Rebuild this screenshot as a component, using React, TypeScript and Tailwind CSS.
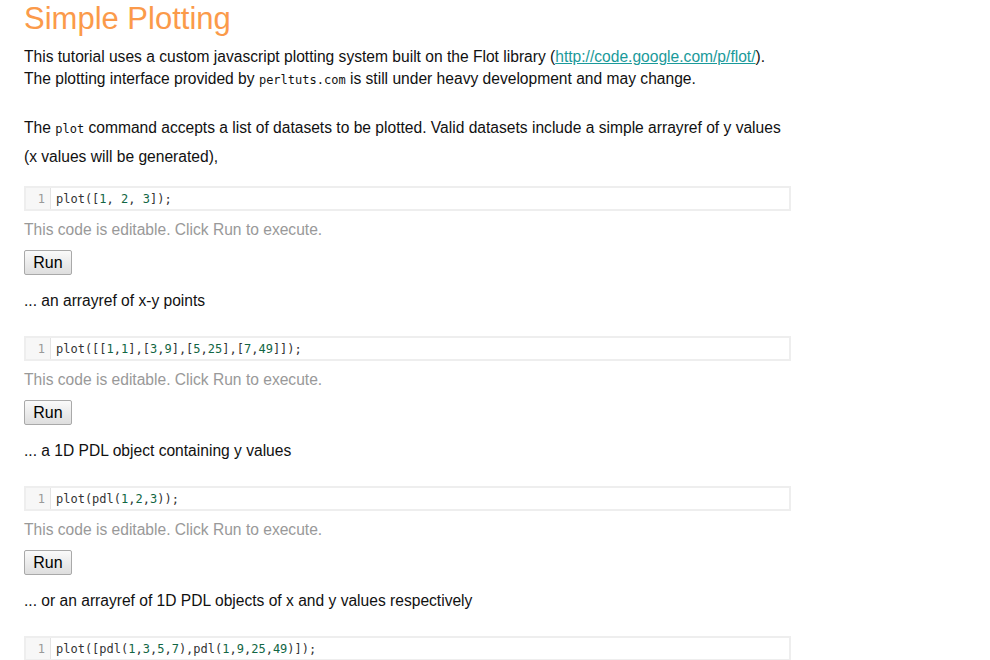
const sans = "font-['Liberation_Sans',Arial,sans-serif]";
const mono = "font-['DejaVu_Sans_Mono',monospace]";

type Token = { t: string; num?: boolean };

function tokenize(code: string): Token[] {
  const out: Token[] = [];
  const re = /(\d+)|([^\d]+)/g;
  let m: RegExpExecArray | null;
  while ((m = re.exec(code))) {
    if (m[1]) out.push({ t: m[1], num: true });
    else out.push({ t: m[2] });
  }
  return out;
}

function CodeBlock({ code }: { code: string }) {
  return (
    <div className="mt-[24px] flex h-[25px] w-[767px] border-2 border-[#eeeeee] bg-white">
      <div className={`${mono} w-[25px] shrink-0 bg-[#f7f7f7] border-r border-[#e4e4e4] pr-[5px] text-right text-[12px] leading-[22px] text-[#999]`}>
        1
      </div>
      <pre className={`${mono} pl-[5px] text-[12px] leading-[22px] text-[#333]`}>
        {tokenize(code).map((tk, i) => (
          <span key={i} className={tk.num ? "text-[#116644]" : ""}>
            {tk.t}
          </span>
        ))}
      </pre>
    </div>
  );
}

function RunBlock({ code, after }: { code: string; after: string }) {
  return (
    <>
      <CodeBlock code={code} />
      <p className="mt-[9px] text-[15.6px] leading-[20px] text-[#999]">
        This code is editable. Click Run to execute.
      </p>
      <button className="mt-[10px] h-[25px] w-[48px] rounded-[2px] border border-[#a9a9a9] bg-gradient-to-b from-[#fafafa] to-[#dedede] text-[16px] leading-[21px] text-black">
        Run
      </button>
      {after ? (
        <p className="mt-[15px] text-[15.6px] leading-[22px] text-[#111]">{after}</p>
      ) : null}
    </>
  );
}

export default function App() {
  return (
    <div className={`${sans} h-[660px] overflow-hidden bg-white px-6 text-[#111]`}>
      <h1 className="text-[31px] leading-[38px] text-[#fb9a4a]">Simple Plotting</h1>

      <p className="mt-2 text-[15.6px] leading-[22px]">
        This tutorial uses a custom javascript plotting system built on the Flot library (
        <a className="text-[#1a9a9a] underline" href="#">
          http://code.google.com/p/flot/
        </a>
        ).
        <br />
        The plotting interface provided by <code className={`${mono} text-[12px]`}>perltuts.com</code> is
        still under heavy development and may change.
      </p>

      <p className="mt-[23px] text-[15.6px] leading-[27px]">
        The <code className={`${mono} text-[12px]`}>plot</code> command accepts a list of datasets to be
        plotted. Valid datasets include a simple arrayref of y values
        <br />
        (x values will be generated),
      </p>

      <div className="flex flex-col items-start">
        <div className="-mt-[8px]" />
        <RunBlock code="plot([1, 2, 3]);" after="... an arrayref of x-y points" />
        <RunBlock code="plot([[1,1],[3,9],[5,25],[7,49]]);" after="... a 1D PDL object containing y values" />
        <RunBlock
          code="plot(pdl(1,2,3));"
          after="... or an arrayref of 1D PDL objects of x and y values respectively"
        />
        <RunBlock code="plot([pdl(1,3,5,7),pdl(1,9,25,49)]);" after="" />
      </div>
    </div>
  );
}
